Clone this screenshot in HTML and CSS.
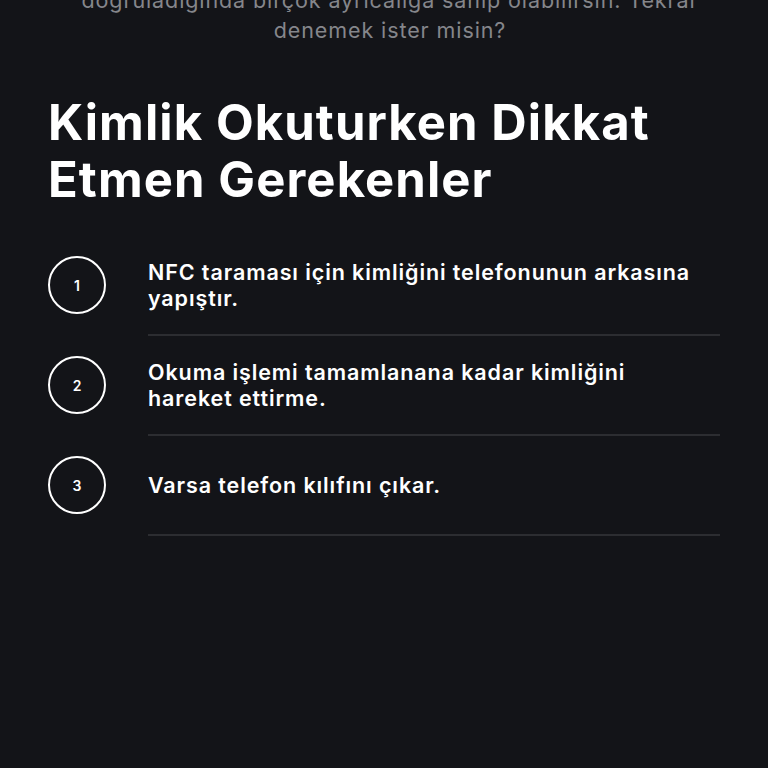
FILE: index.html
```html
<!DOCTYPE html>
<html lang="tr">
<head>
<meta charset="utf-8">
<link rel="stylesheet" href="styles.css">
</head>
<body>
<div class="page">
  <p class="intro">doğruladığında birçok ayrıcalığa sahip olabilirsin. Tekrar denemek ister misin?</p>
  <h1 class="title">Kimlik Okuturken Dikkat Etmen Gerekenler</h1>
  <ul class="steps">
    <li class="step">
      <div class="step-row">
        <span class="num">1</span>
        <span class="text">NFC taraması için kimliğini telefonunun arkasına yapıştır.</span>
      </div>
      <div class="divider"></div>
    </li>
    <li class="step">
      <div class="step-row">
        <span class="num">2</span>
        <span class="text">Okuma işlemi tamamlanana kadar kimliğini hareket ettirme.</span>
      </div>
      <div class="divider"></div>
    </li>
    <li class="step">
      <div class="step-row">
        <span class="num">3</span>
        <span class="text">Varsa telefon kılıfını çıkar.</span>
      </div>
      <div class="divider"></div>
    </li>
  </ul>
</div>
</body>
</html>
```
FILE: styles.css
```css
html, body {
  margin: 0;
  padding: 0;
  background: #131418;
  height: 100%;
  overflow: hidden;
}
.page {
  font-family: Inter, "Noto Sans", sans-serif;
  color: #ffffff;
  padding: 0 48px;
}
.intro {
  margin: -15px 0 0;
  padding-left: 12px;
  text-align: center;
  font-size: 21.5px;
  line-height: 30px;
  letter-spacing: 0.9px;
  color: #85868b;
  font-weight: 400;
}
.title {
  margin: 49px 0 0;
  font-size: 49px;
  line-height: 57px;
  font-weight: 700;
  letter-spacing: 1.1px;
  width: 640px;
}
.steps {
  list-style: none;
  margin: 28px 0 0;
  padding: 0;
}
.step-row {
  display: flex;
  align-items: center;
  gap: 42px;
  padding: 20px 0;
}
.num {
  flex: none;
  width: 54px;
  height: 54px;
  border: 2px solid #ffffff;
  border-radius: 50%;
  display: flex;
  align-items: center;
  justify-content: center;
  font-size: 14px;
  font-weight: 600;
}
.text {
  font-size: 21.5px;
  line-height: 26px;
  font-weight: 600;
  letter-spacing: 0.9px;
  max-width: 560px;
}
.divider {
  margin-left: 100px;
  height: 2px;
  background: #2c2d31;
}
```
